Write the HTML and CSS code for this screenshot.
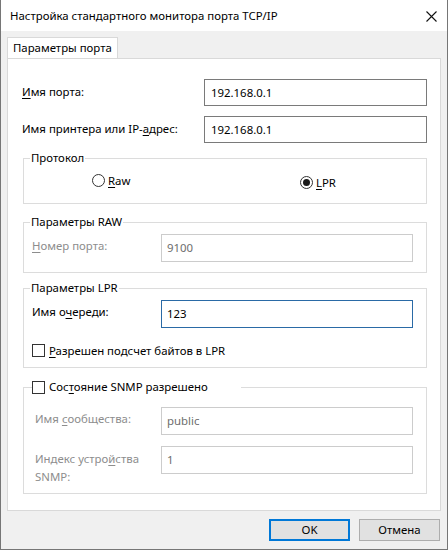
FILE: index.html
```html
<!DOCTYPE html>
<html lang="ru">
<head>
<meta charset="utf-8">
<title>Настройка стандартного монитора порта TCP/IP</title>
<link rel="stylesheet" href="styles.css">
</head>
<body>
<div class="window">
  <div class="titlebar">
    <span class="title">Настройка стандартного монитора порта TCP/IP</span>
    <svg class="close" width="11" height="11" viewBox="0 0 11 11"><path d="M0.5 0.5L10.5 10.5M10.5 0.5L0.5 10.5" stroke="#111" stroke-width="1.1" fill="none"/></svg>
  </div>
  <div class="client">
    <div class="tabs"><div class="tab">Параметры порта</div></div>
    <div class="panel">
      <div class="row row-first">
        <span class="lbl"><u>И</u>мя порта:</span>
        <div class="edit">192.168.0.1</div>
      </div>
      <div class="row row-second">
        <span class="lbl">Имя принтера или IP-<u>а</u>дрес:</span>
        <div class="edit">192.168.0.1</div>
      </div>

      <fieldset class="group g-proto">
        <legend>Протокол</legend>
        <div class="radios">
          <span class="radio-item raw"><span class="radio"></span><span><u>R</u>aw</span></span>
          <span class="radio-item lpr"><span class="radio checked"></span><span><u>L</u>PR</span></span>
        </div>
      </fieldset>

      <fieldset class="group g-raw">
        <legend>Параметры RAW</legend>
        <div class="grow">
          <span class="glbl disabled"><u>Н</u>омер порта:</span>
          <div class="gedit off">9100</div>
        </div>
      </fieldset>

      <fieldset class="group g-lpr">
        <legend>Параметры LPR</legend>
        <div class="grow">
          <span class="glbl">Имя о<u>ч</u>ереди:</span>
          <div class="gedit focus">123</div>
        </div>
        <div class="checkrow">
          <span class="check"></span><span><u>Р</u>азрешен подсчет байтов в LPR</span>
        </div>
      </fieldset>

      <fieldset class="group g-snmp">
        <legend class="check-legend"><span class="check"></span><span>Сос<u>т</u>ояние SNMP разрешено</span></legend>
        <div class="grow snmp-row1">
          <span class="glbl disabled">Имя <u>с</u>ообщества:</span>
          <div class="gedit off">public</div>
        </div>
        <div class="grow snmp-row2">
          <span class="glbl disabled two">Индекс устро<u>й</u>ства<br>SNMP:</span>
          <div class="gedit off">1</div>
        </div>
      </fieldset>
    </div>
    <div class="buttons">
      <div class="btn default">OK</div>
      <div class="btn">Отмена</div>
    </div>
  </div>
</div>
</body>
</html>
```

FILE: styles.css
```css
* { box-sizing: border-box; }
html, body { margin: 0; padding: 0; }
body {
  width: 448px;
  height: 550px;
  overflow: hidden;
  font-family: "Noto Sans", "Segoe UI", "DejaVu Sans", sans-serif;
  font-size: 11.4px;
  color: #000;
  background: #fff;
}
u { text-decoration: underline; text-underline-offset: 2px; }

.window {
  width: 448px;
  height: 550px;
  display: flex;
  flex-direction: column;
  border: 1px solid #767676;
  border-top: none;
}

.titlebar {
  height: 31px;
  flex: none;
  background: #fff;
  display: flex;
  align-items: center;
  justify-content: space-between;
  padding: 0 10px 0 9px;
}
.title { line-height: 16px; }
.close { display: block; margin-top: 1px; }

.client {
  flex: 1;
  background: #f0f0f0;
  display: flex;
  flex-direction: column;
  padding: 6px 6px 0 6px;
}

.tabs { display: flex; height: 21px; flex: none; }
.tab {
  position: relative;
  z-index: 1;
  background: #fff;
  border: 1px solid #d9d9d9;
  border-bottom: none;
  height: 21px;
  margin-bottom: -1px;
  padding: 0 5px;
  line-height: 20px;
}

.panel {
  flex: none;
  background: #fff;
  border: 1px solid #d9d9d9;
  display: flex;
  flex-direction: column;
  padding: 0 13px 16px 13px;
}

.row { display: flex; align-items: center; height: 27px; }
.row-first { margin-top: 20px; }
.row-second { margin-top: 10px; }
.lbl { width: 183px; flex: none; padding-left: 1px; margin-top: -2px; }
.edit {
  flex: 1;
  height: 27px;
  border: 1px solid #7a7a7a;
  padding-left: 6px;
  line-height: 25px;
}

.group {
  margin: 7px 0 0 2px;
  border: 1px solid #dcdcdc;
  padding: 0;
  min-width: 0;
}
.group legend {
  padding: 0 1px;
  margin-left: 6px;
  line-height: 16px;
}

.g-proto { padding-bottom: 12px; }
.radios {
  display: flex;
  align-items: center;
  height: 20px;
  margin-top: 5px;
  padding-left: 68px;
}
.radio-item { display: flex; align-items: center; gap: 3px; }
.raw { width: 208px; flex: none; margin-bottom: 2px; }
.lpr { margin-top: 3px; }
.radio {
  width: 13px;
  height: 13px;
  border: 1px solid #333;
  border-radius: 50%;
  background: #fff;
  display: flex;
  align-items: center;
  justify-content: center;
}
.radio.checked::after {
  content: "";
  width: 7px;
  height: 7px;
  border-radius: 50%;
  background: #1a1a1a;
}

.grow {
  display: flex;
  align-items: flex-start;
  margin-top: 4px;
  padding: 0 13px 0 8px;
}
.glbl {
  width: 129px;
  flex: none;
  padding-top: 3px;
  line-height: 18px;
}
.disabled { color: #8d8d8d; }
.gedit {
  flex: 1;
  height: 28px;
  border: 1px solid #7a7a7a;
  padding-left: 5px;
  line-height: 26px;
}
.gedit.off { border-color: #cccccc; color: #6d6d6d; }
.gedit.focus { border-color: #2a6aa6; }

.g-raw { margin-top: 10px; padding-bottom: 10px; }
.g-lpr { margin-top: 7px; padding-bottom: 9px; }
.checkrow {
  display: flex;
  align-items: center;
  gap: 4px;
  height: 16px;
  margin-top: 14px;
  padding-left: 8px;
}
.check {
  width: 13px;
  height: 13px;
  flex: none;
  border: 1px solid #333;
  background: #fff;
}

.g-snmp { margin-top: 11px; padding-bottom: 7px; }
.group .check-legend {
  display: flex;
  align-items: center;
  gap: 4px;
  margin-left: 8px;
  padding: 0 33px 0 0;
}
.snmp-row1 { margin-top: 12px; padding-left: 11px; }
.snmp-row1 .glbl { width: 126px; }
.snmp-row2 { margin-top: 11px; padding-left: 11px; }
.glbl.two { padding-top: 4px; width: 126px; white-space: nowrap; }

.buttons {
  display: flex;
  justify-content: flex-end;
  gap: 9px;
  margin-top: 8px;
  padding-right: 1px;
}
.btn {
  width: 81px;
  height: 22px;
  background: #e1e1e1;
  border: 1px solid #adadad;
  text-align: center;
  line-height: 20px;
}
.btn.default {
  border-color: #0078d7;
  box-shadow: inset 0 0 0 1px #0078d7;
}
```
